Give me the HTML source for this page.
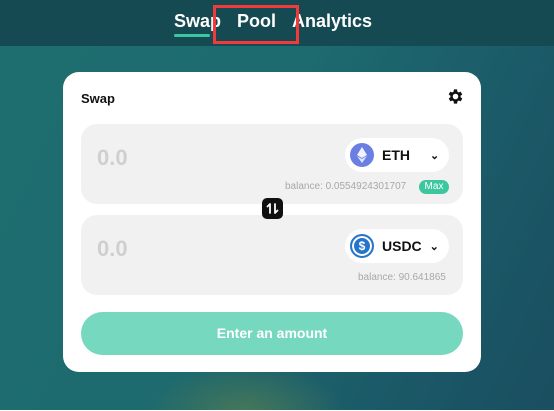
<!DOCTYPE html>
<html><head><style>
*{margin:0;padding:0;box-sizing:border-box}
body{width:554px;height:411px;overflow:hidden;font-family:"Liberation Sans",Arial,sans-serif;position:relative;
background:radial-gradient(ellipse 100px 50px at 245px 412px,rgba(80,125,85,.8),rgba(80,125,85,0) 100%),linear-gradient(115deg,#1e6e6f 0%,#1d6a6f 45%,#1b5a68 75%,#1a4e60 100%);}
.hdr{position:absolute;left:0;top:0;width:554px;height:46px;background:#164a52}
.nav{position:absolute;top:11px;font-size:18px;font-weight:bold;color:#fff}
.ul{position:absolute;left:174px;top:34px;width:36px;height:3px;background:#3cc7a0;border-radius:2px}
.red{position:absolute;left:213px;top:5px;width:86px;height:39px;border:3px solid #f23a3a}
.card{position:absolute;left:63px;top:72px;width:418px;height:300px;background:#fff;border-radius:16px}
.field{position:absolute;left:81px;width:382px;height:80px;background:#f1f1f1;border-radius:16px}
.zero{position:absolute;left:16px;top:21px;font-size:22px;font-weight:bold;color:#cfcfcf}
.tok{position:absolute;right:14px;top:14px;height:34px;background:#fff;border-radius:17px;display:flex;align-items:center;padding-left:5px;font-weight:bold;font-size:14px;color:#111}
.ic{width:24px;height:24px;border-radius:50%;margin-right:8px}
.bal{position:absolute;font-size:10px;color:#a8a8a8}
.btn{position:absolute;left:81px;top:312px;width:382px;height:43px;border-radius:22px;background:#77d8c0;color:#fff;font-weight:bold;font-size:14px;text-align:center;line-height:43px}
.bot{position:absolute;left:0;top:410px;width:554px;height:1px;background:#fff}
</style></head><body>
<div class="hdr"></div>
<div class="nav" style="left:174px">Swap</div>
<div class="nav" style="left:237px">Pool</div>
<div class="nav" style="left:292px">Analytics</div>
<div class="ul"></div>
<div class="red"></div>
<div class="card"></div>
<div style="position:absolute;left:81px;top:91px;font-size:13px;font-weight:bold;color:#111">Swap</div>
<svg style="position:absolute;left:446px;top:87px" width="19" height="19" viewBox="0 0 24 24"><path fill="#111" fill-rule="evenodd" d="M19.4 13a7.5 7.5 0 0 0 0-2l2.1-1.6-2-3.5-2.5 1a7.6 7.6 0 0 0-1.7-1L15 3h-4l-.4 2.9a7.6 7.6 0 0 0-1.7 1l-2.5-1-2 3.5L6.6 11a7.5 7.5 0 0 0 0 2l-2.1 1.6 2 3.5 2.5-1a7.6 7.6 0 0 0 1.7 1L11 21h4l.4-2.9a7.6 7.6 0 0 0 1.7-1l2.5 1 2-3.5zM13 15.5a3.5 3.5 0 1 1 0-7 3.5 3.5 0 0 1 0 7z" transform="translate(-1 0)"/></svg>
<div class="field" style="top:124px"><div class="zero">0.0</div>
<div class="tok" style="width:104px"><div class="ic" style="background:#6b7fe3;display:flex;align-items:center;justify-content:center"><svg width="10" height="16" viewBox="0 0 10 16"><path fill="#fff" d="M5 0L0 8l5 3 5-3z" opacity=".9"/><path fill="#fff" d="M5 12L0 9l5 7 5-7z" opacity=".8"/></svg></div>ETH<span style="margin-left:20px;font-size:11px">&#8964;</span></div>
<div class="bal" style="left:204px;top:57px">balance: 0.0554924301707</div>
<div style="position:absolute;left:338px;top:56px;width:30px;height:14px;border-radius:7px;background:#3cc7a0;color:#fff;font-size:10px;text-align:center;line-height:14px">Max</div>
</div>
<div class="field" style="top:215px"><div class="zero">0.0</div>
<div class="tok" style="width:104px"><div class="ic" style="background:#2775ca;display:flex;align-items:center;justify-content:center;color:#fff;font-size:12px;border:2px solid #2775ca;box-shadow:inset 0 0 0 2px #fff">$</div>USDC<span style="margin-left:8px;font-size:11px">&#8964;</span></div>
<div class="bal" style="left:277px;top:57px">balance: 90.641865</div>
</div>
<div style="position:absolute;left:262px;top:198px;width:21px;height:21px;background:#111;border-radius:5px;z-index:5"><svg width="21" height="21" viewBox="0 0 21 21" fill="none" stroke="#fff" stroke-width="1.8" stroke-linecap="round" stroke-linejoin="round"><path d="M8 15V6M5.5 8.5L8 6M13 6v9M15.5 12.5L13 15"/></svg></div>
<div class="btn">Enter an amount</div>
<div class="bot"></div>
</body></html>
